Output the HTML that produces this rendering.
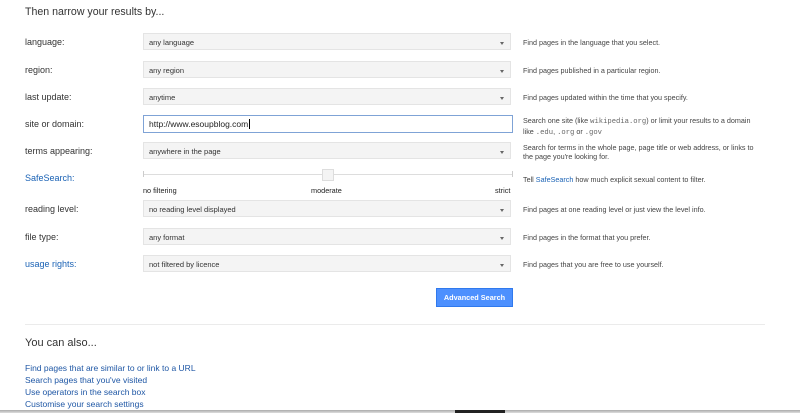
<!DOCTYPE html>
<html><head><style>
body{margin:0;width:800px;height:413px;background:#fff;font-family:"Liberation Sans",Arial,sans-serif;position:relative;overflow:hidden}
.a{position:absolute}
.lbl{position:absolute;left:25px;font-size:9px;color:#333}
.sel{position:absolute;left:143px;width:368px;height:17px;background:#f4f4f4;border:1px solid #e4e4e4;font-size:7.5px;color:#333;line-height:17px;padding-left:5px;box-sizing:border-box}
.sel:after{content:"";position:absolute;right:6px;top:8px;border-left:2.5px solid transparent;border-right:2.5px solid transparent;border-top:3px solid #666}
.d{position:absolute;left:523px;font-size:7.2px;color:#444;line-height:9px;width:238px}
.blue{color:#1a62b5}
code{font-family:"Liberation Mono",monospace;color:#666}
.lk{position:absolute;left:25px;font-size:8.5px;color:#1f57a5}
</style></head><body>
<div class="a" style="left:25px;top:6px;font-size:10.6px;color:#333">Then narrow your results by...</div>

<div class="lbl" style="top:37px">language:</div><div class="sel" style="top:33px">any language</div><div class="d" style="top:38px">Find pages in the language that you select.</div>
<div class="lbl" style="top:65px">region:</div><div class="sel" style="top:61px">any region</div><div class="d" style="top:66px">Find pages published in a particular region.</div>
<div class="lbl" style="top:92px">last update:</div><div class="sel" style="top:88px">anytime</div><div class="d" style="top:93px">Find pages updated within the time that you specify.</div>
<div class="lbl" style="top:119px">site or domain:</div>
<div class="a" style="left:143px;top:115px;width:370px;height:18px;border:1px solid #7fa3d6;box-sizing:border-box;font-size:8.5px;color:#222;line-height:16px;padding-left:5px;background:#fff">http://www.esoupblog.com<span style="border-left:1px solid #000;margin-left:1px"></span></div>
<div class="d" style="top:116px">Search one site (like <code>wikipedia.org</code>) or limit your results to a domain like <code>.edu</code>, <code>.org</code> or <code>.gov</code></div>
<div class="lbl" style="top:146px">terms appearing:</div><div class="sel" style="top:142px">anywhere in the page</div><div class="d" style="top:143px">Search for terms in the whole page, page title or web address, or links to the page you're looking for.</div>
<div class="lbl blue" style="top:173px">SafeSearch:</div>
<div class="a" style="left:143px;top:174px;width:370px;height:1px;background:#ddd"></div>
<div class="a" style="left:143px;top:171px;width:1px;height:6px;background:#ccc"></div>
<div class="a" style="left:512px;top:171px;width:1px;height:6px;background:#ccc"></div>
<div class="a" style="left:322px;top:169px;width:10px;height:10px;background:#f4f4f4;border:1px solid #ddd"></div>
<div class="a" style="left:143px;top:186px;font-size:7.3px;color:#222">no filtering</div>
<div class="a" style="left:311px;top:186px;font-size:7.3px;color:#222">moderate</div>
<div class="a" style="left:495px;top:186px;font-size:7.3px;color:#222">strict</div>
<div class="d" style="top:175px">Tell <span class="blue">SafeSearch</span> how much explicit sexual content to filter.</div>
<div class="lbl" style="top:204px">reading level:</div><div class="sel" style="top:200px">no reading level displayed</div><div class="d" style="top:205px">Find pages at one reading level or just view the level info.</div>
<div class="lbl" style="top:232px">file type:</div><div class="sel" style="top:228px">any format</div><div class="d" style="top:233px">Find pages in the format that you prefer.</div>
<div class="lbl blue" style="top:259px">usage rights:</div><div class="sel" style="top:255px">not filtered by licence</div><div class="d" style="top:260px">Find pages that you are free to use yourself.</div>

<div class="a" style="left:436px;top:288px;width:77px;height:19px;background:#4d90fe;border:1px solid #3079ed;box-sizing:border-box;color:#fff;font-size:7.3px;font-weight:bold;text-align:center;line-height:17px">Advanced Search</div>
<div class="a" style="left:25px;top:324px;width:740px;height:1px;background:#ebebeb"></div>
<div class="a" style="left:25px;top:337px;font-size:11px;color:#333">You can also...</div>
<div class="lk" style="top:363px">Find pages that are similar to or link to a URL</div>
<div class="lk" style="top:375px">Search pages that you've visited</div>
<div class="lk" style="top:387px">Use operators in the search box</div>
<div class="lk" style="top:399px">Customise your search settings</div>
<div class="a" style="left:0;top:410px;width:800px;height:3px;background:linear-gradient(#aaa,#ddd)"></div>
<div class="a" style="left:455px;top:410px;width:50px;height:3px;background:#222"></div>
</body></html>
